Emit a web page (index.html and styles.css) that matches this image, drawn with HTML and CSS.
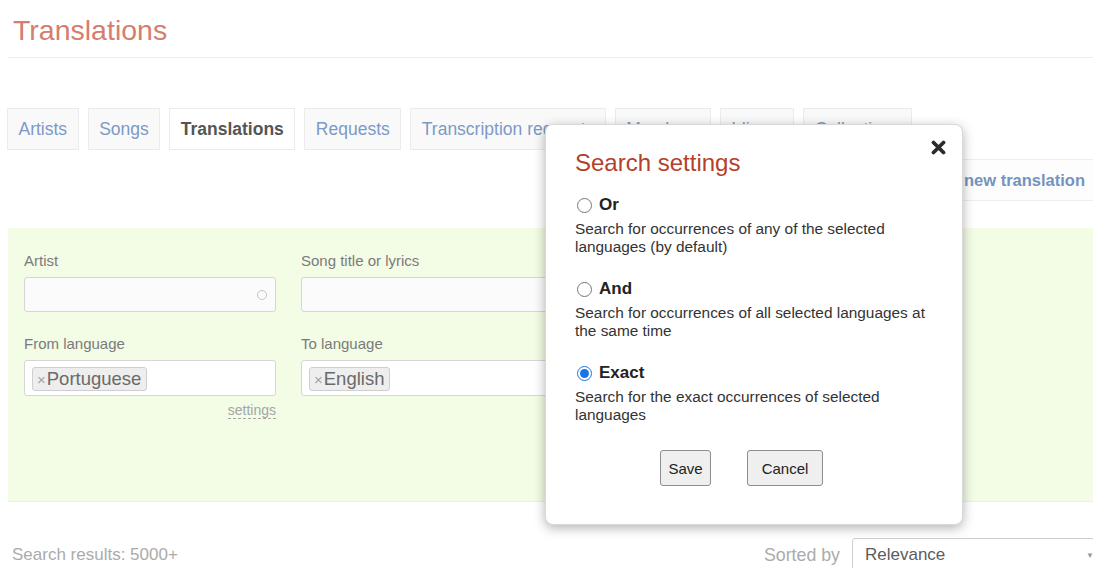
FILE: index.html
```html
<!DOCTYPE html>
<html lang="en">
<head>
<meta charset="utf-8">
<title>Translations</title>
<link rel="stylesheet" href="styles.css">
</head>
<body>
<div class="page">
  <header class="page-header">
    <h1 class="page-title">Translations</h1>
  </header>

  <nav class="tabs">
    <a class="tab" href="#">Artists</a>
    <a class="tab" href="#">Songs</a>
    <a class="tab tab-active" href="#">Translations</a>
    <a class="tab" href="#">Requests</a>
    <a class="tab" href="#">Transcription requests</a>
    <a class="tab" href="#">Members</a>
    <a class="tab" href="#">Idioms</a>
    <a class="tab" href="#">Collections</a>
  </nav>

  <div class="toolbar">
    <a class="toolbar-link" href="#">+ Add new translation</a>
  </div>

  <form class="filters">
    <div class="field">
      <label class="field-label">Artist</label>
      <div class="input">
        <span class="input-spinner"></span>
      </div>
    </div>
    <div class="field">
      <label class="field-label">Song title or lyrics</label>
      <div class="input"></div>
    </div>
    <div class="field">
      <label class="field-label">From language</label>
      <div class="input input-tags">
        <span class="tag"><span class="tag-x">×</span>Portuguese</span>
      </div>
      <div class="field-extra"><a class="settings-link" href="#">settings</a></div>
    </div>
    <div class="field">
      <label class="field-label">To language</label>
      <div class="input input-tags">
        <span class="tag"><span class="tag-x">×</span>English</span>
      </div>
    </div>
  </form>

  <div class="results-bar">
    <span class="results-count">Search results: 5000+</span>
    <div class="sort">
      <span class="sort-label">Sorted by</span>
      <div class="select">
        <span>Relevance</span>
        <span class="select-arrow">▼</span>
      </div>
    </div>
  </div>
</div>

<div class="dialog">
  <button class="dialog-close" type="button" aria-label="Close">
    <svg width="15" height="15" viewBox="0 0 15 15">
      <path d="M2.5 2.5 L12.5 12.5 M12.5 2.5 L2.5 12.5" stroke="#2b2b2b" stroke-width="3.8" stroke-linecap="round"/>
    </svg>
  </button>
  <h2 class="dialog-title">Search settings</h2>

  <div class="option">
    <label class="option-head"><input type="radio" name="mode" class="radio"> Or</label>
    <p class="option-desc">Search for occurrences of any of the selected languages (by default)</p>
  </div>
  <div class="option">
    <label class="option-head"><input type="radio" name="mode" class="radio"> And</label>
    <p class="option-desc">Search for occurrences of all selected languages at the same time</p>
  </div>
  <div class="option">
    <label class="option-head"><input type="radio" name="mode" class="radio" checked> Exact</label>
    <p class="option-desc">Search for the exact occurrences of selected languages</p>
  </div>

  <div class="dialog-actions">
    <button class="btn btn-save" type="button">Save</button>
    <button class="btn btn-cancel" type="button">Cancel</button>
  </div>
</div>
</body>
</html>
```

FILE: styles.css
```css
* {
  box-sizing: border-box;
}

html, body {
  margin: 0;
  padding: 0;
  overflow: hidden;
  background: #ffffff;
}

body {
  font-family: "Liberation Sans", Arial, sans-serif;
  color: #333;
  width: 1093px;
  height: 568px;
  position: relative;
}

.page {
  padding-left: 8px;
}

/* header */
.page-header {
  padding: 14px 0 11px 5px;
  border-bottom: 1px solid #ececec;
}

.page-title {
  margin: 0;
  font-size: 28.5px;
  font-weight: normal;
  line-height: 32px;
  color: #d47e70;
}

/* tabs */
.tabs {
  display: flex;
  gap: 9px;
  margin-top: 50px;
  margin-left: -1px;
}

.tab {
  display: block;
  padding: 10px 10.5px;
  line-height: 20px;
  font-size: 17.5px;
  color: #7c9ac6;
  text-decoration: none;
  background: #f9f9f9;
  border: 1px solid #ebebeb;
  white-space: nowrap;
}

.tab-active {
  background: #fff;
  color: #555;
  font-weight: bold;
}

/* toolbar */
.toolbar {
  display: flex;
  justify-content: flex-end;
  margin-top: 9px;
  height: 42px;
  border-top: 1px solid #eeeeee;
  border-bottom: 1px solid #eeeeee;
  background: #fdfdfd;
  margin-left: 880px;
}

.toolbar-link {
  padding: 0 8px 0 0;
  line-height: 40px;
  font-size: 16.5px;
  font-weight: bold;
  color: #7393c0;
  text-decoration: none;
  white-space: nowrap;
}

/* filter panel */
.filters {
  margin: 27px 0 0 0;
  height: 274px;
  background: #f3fce5;
  border-bottom: 1px solid #eaf3dc;
  padding: 24px 16px 0 16px;
  display: grid;
  grid-template-columns: 252px 252px;
  column-gap: 25px;
  row-gap: 23px;
  align-content: start;
}

.field-label {
  display: block;
  font-size: 15px;
  line-height: 18px;
  color: #7b7b7b;
  margin-bottom: 7px;
}

.input {
  position: relative;
  height: 35px;
  background: #fbfbfb;
  border: 1px solid #d6d6d6;
  border-radius: 3px;
}

.input-tags {
  height: 36px;
  background: #fff;
  padding: 6px 0 0 7px;
}

.input-spinner {
  position: absolute;
  right: 8px;
  top: 12px;
  width: 10px;
  height: 10px;
  border: 1px solid #c4c4c4;
  border-radius: 50%;
}

.tag {
  display: inline-block;
  height: 24px;
  line-height: 22px;
  padding: 0 5px 0 4px;
  font-size: 18.5px;
  color: #6a6a6a;
  background: #eeeeee;
  border: 1px solid #cfcfcf;
  border-radius: 3px;
}

.tag-x {
  font-size: 15px;
  color: #a3a3a3;
  margin-right: 1px;
}

.field-extra {
  text-align: right;
  margin-top: 6px;
  line-height: 16px;
}

.settings-link {
  font-size: 14px;
  color: #a5a5a5;
  text-decoration: none;
  border-bottom: 1px dashed #a5a5a5;
}

/* results bar */
.results-bar {
  display: flex;
  justify-content: space-between;
  align-items: center;
  margin-top: 36px;
  padding-left: 4px;
}

.results-count {
  font-size: 17px;
  color: #ababab;
}

.sort {
  display: flex;
  align-items: center;
  gap: 12px;
  margin-right: -20px;
}

.sort-label {
  font-size: 17.8px;
  color: #ababab;
}

.select {
  display: flex;
  justify-content: space-between;
  align-items: center;
  width: 261px;
  height: 34px;
  padding: 0 18px 0 12px;
  font-size: 17px;
  color: #5c5c5c;
  border: 1px solid #cfcfcf;
  border-radius: 3px;
}

.select-arrow {
  font-size: 8px;
  color: #9a9a9a;
}

/* search settings dialog */
.dialog {
  position: absolute;
  left: 545px;
  top: 124px;
  width: 418px;
  height: 401px;
  padding: 24px 29px 0 29px;
  background: #fff;
  border: 1px solid #d9d9d9;
  border-radius: 8px;
  box-shadow: 0 3px 12px rgba(0, 0, 0, 0.3);
}

.dialog-close {
  position: absolute;
  right: 16px;
  top: 15px;
  padding: 0;
  border: 0;
  background: none;
  width: 15px;
  height: 15px;
  line-height: 0;
}

.dialog-title {
  margin: 0;
  font-size: 24px;
  font-weight: normal;
  line-height: 28px;
  color: #b63f2b;
}

.option {
  margin-top: 18px;
}

.option + .option {
  margin-top: 23px;
}

.option-head {
  display: flex;
  align-items: center;
  height: 20px;
  font-size: 17px;
  font-weight: bold;
  color: #222;
  gap: 7px;
}

.radio {
  margin: 0 0 0 2px;
  width: 15px;
  height: 15px;
  accent-color: #1a73e8;
}

.option-desc {
  margin: 5px 0 0 0;
  font-size: 15.4px;
  line-height: 18px;
  color: #333;
}

.dialog-actions {
  display: flex;
  gap: 36px;
  margin-top: 26px;
  padding-left: 85px;
}

.btn {
  height: 36px;
  padding: 0;
  font-family: "Liberation Sans", Arial, sans-serif;
  font-size: 15px;
  color: #222;
  background: #efefef;
  border: 1px solid #8d8d8d;
  border-radius: 3px;
}

.btn-save {
  width: 51px;
}

.btn-cancel {
  width: 76px;
}
```
